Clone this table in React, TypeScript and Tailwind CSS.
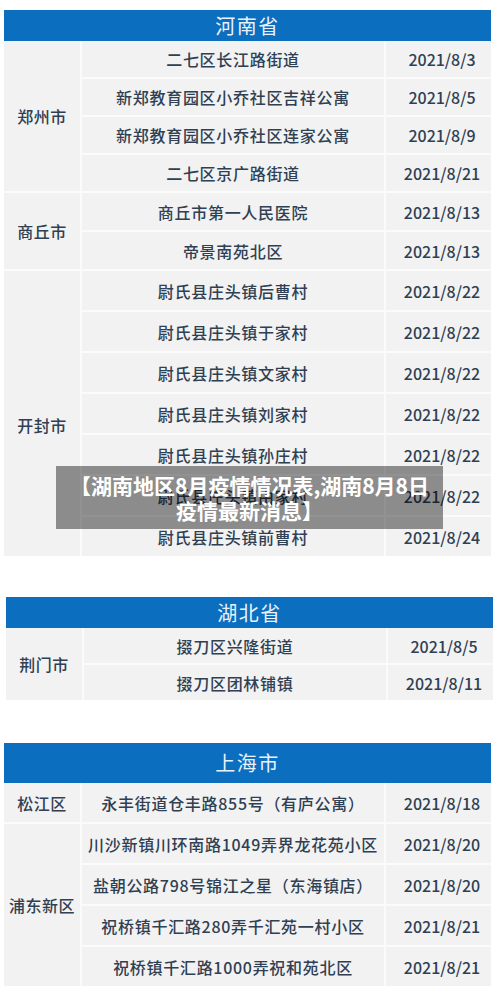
import React from "react";

type Row = [string, string];
type Group = { city: string; rows: Row[]; rowH: string; cityPad?: string };

const henan: Group[] = [
  {
    city: "郑州市",
    rowH: "h-[36px]",
    rows: [
      ["二七区长江路街道", "2021/8/3"],
      ["新郑教育园区小乔社区吉祥公寓", "2021/8/5"],
      ["新郑教育园区小乔社区连家公寓", "2021/8/9"],
      ["二七区京广路街道", "2021/8/21"],
    ],
  },
  {
    city: "商丘市",
    rowH: "h-[37px]",
    rows: [
      ["商丘市第一人民医院", "2021/8/13"],
      ["帝景南苑北区", "2021/8/13"],
    ],
  },
  {
    city: "开封市",
    rowH: "h-[39px]",
    cityPad: "pt-[22px]",
    rows: [
      ["尉氏县庄头镇后曹村", "2021/8/22"],
      ["尉氏县庄头镇于家村", "2021/8/22"],
      ["尉氏县庄头镇文家村", "2021/8/22"],
      ["尉氏县庄头镇刘家村", "2021/8/22"],
      ["尉氏县庄头镇孙庄村", "2021/8/22"],
      ["尉氏县庄头镇由家村", "2021/8/22"],
      ["尉氏县庄头镇前曹村", "2021/8/24"],
    ],
  },
];

const hubei: Group[] = [
  {
    city: "荆门市",
    rowH: "h-[35px]",
    rows: [
      ["掇刀区兴隆街道", "2021/8/5"],
      ["掇刀区团林铺镇", "2021/8/11"],
    ],
  },
];

const shanghai: Group[] = [
  {
    city: "松江区",
    rowH: "h-[39px]",
    rows: [["永丰街道仓丰路855号（有庐公寓）", "2021/8/18"]],
  },
  {
    city: "浦东新区",
    rowH: "h-[39px]",
    rows: [
      ["川沙新镇川环南路1049弄界龙花苑小区", "2021/8/20"],
      ["盐朝公路798号锦江之星（东海镇店）", "2021/8/20"],
      ["祝桥镇千汇路280弄千汇苑一村小区", "2021/8/21"],
      ["祝桥镇千汇路1000弄祝和苑北区", "2021/8/21"],
    ],
  },
];

function Table({
  title,
  groups,
  headH,
  extra,
}: {
  title: string;
  groups: Group[];
  headH: string;
  extra?: string;
}) {
  return (
    <div className={`w-[487px] ${extra ?? "ml-[4px]"}`}>
      <div
        className={`${headH} bg-[#0b6ebf] flex items-center justify-center text-[20px] tracking-[1.5px] font-normal text-[#e9f2fb] leading-none`}
      >
        {title}
      </div>
      <div className="flex flex-col gap-[2px] bg-[#fbfbfb]">
        {groups.map((g) => (
          <div key={g.city} className="flex gap-[2px]">
            <div
              className={`w-[76px] shrink-0 bg-[#f2f2f2] flex items-center justify-center text-[16px] tracking-[0.5px] ${g.cityPad ?? ""}`}
            >
              {g.city}
            </div>
            <div className="flex flex-col gap-[2px] flex-1">
              {g.rows.map(([addr, date], i) => (
                <div key={i} className={`flex gap-[2px] ${g.rowH}`}>
                  <div className="w-[302px] shrink-0 bg-[#f2f2f2] flex items-center justify-center text-[16px] tracking-[0.7px] whitespace-nowrap">
                    {addr}
                  </div>
                  <div className="flex-1 bg-[#f2f2f2] flex items-center justify-center pl-[7px] text-[16px]">
                    {date}
                  </div>
                </div>
              ))}
            </div>
          </div>
        ))}
      </div>
    </div>
  );
}

export default function App() {
  return (
    <div className="w-[500px] h-[996px] bg-white font-['Noto_Sans_CJK_SC',sans-serif] font-medium text-[#2f4052] overflow-hidden">
      <div className="relative pt-[10px]">
        <Table title="河南省" groups={henan} headH="h-[31px]" />
        <div className="absolute left-[56px] top-[466px] w-[387px] h-[63px] bg-[rgba(0,0,0,0.42)] flex flex-col items-center justify-center text-white font-bold text-[21px] leading-[25px] text-center">
          <span>【湖南地区8月疫情情况表,湖南8月8日</span>
          <span>疫情最新消息】</span>
        </div>
      </div>
      <div className="mt-[41px]">
        <Table title="湖北省" groups={hubei} headH="h-[31px]" extra="ml-[6px]" />
      </div>
      <div className="mt-[43px]">
        <Table title="上海市" groups={shanghai} headH="h-[40px]" />
      </div>
    </div>
  );
}
